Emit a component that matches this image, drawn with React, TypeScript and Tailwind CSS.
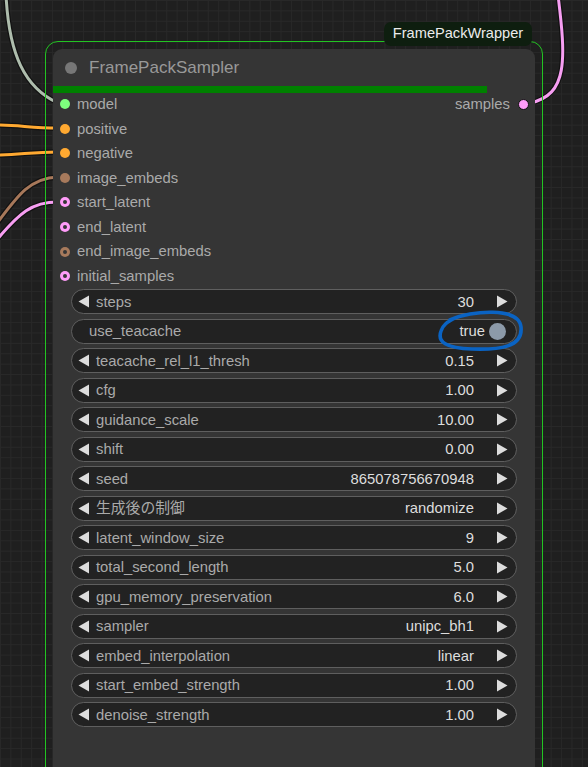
import React from "react"

type Slot = { name: string; color: string; ring?: boolean }

const slots: Slot[] = [
  { name: "model", color: "#7dff7d" },
  { name: "positive", color: "#ffa931" },
  { name: "negative", color: "#ffa931" },
  { name: "image_embeds", color: "#a77a5c" },
  { name: "start_latent", color: "#ff9cf9", ring: true },
  { name: "end_latent", color: "#ff9cf9", ring: true },
  { name: "end_image_embeds", color: "#a77a5c", ring: true },
  { name: "initial_samples", color: "#ff9cf9", ring: true },
]

const widgets: { label: string; value: string; toggle?: boolean }[] = [
  { label: "steps", value: "30" },
  { label: "use_teacache", value: "true", toggle: true },
  { label: "teacache_rel_l1_thresh", value: "0.15" },
  { label: "cfg", value: "1.00" },
  { label: "guidance_scale", value: "10.00" },
  { label: "shift", value: "0.00" },
  { label: "seed", value: "865078756670948" },
  { label: "生成後の制御", value: "randomize" },
  { label: "latent_window_size", value: "9" },
  { label: "total_second_length", value: "5.0" },
  { label: "gpu_memory_preservation", value: "6.0" },
  { label: "sampler", value: "unipc_bh1" },
  { label: "embed_interpolation", value: "linear" },
  { label: "start_embed_strength", value: "1.00" },
  { label: "denoise_strength", value: "1.00" },
]

function Arrow({ dir }: { dir: "left" | "right" }) {
  return (
    <svg width="12" height="13" viewBox="0 0 12 13" className="shrink-0">
      {dir === "left" ? (
        <polygon points="11,0.5 11,12.5 0.5,6.5" fill="#dddddd" />
      ) : (
        <polygon points="1,0.5 1,12.5 11.5,6.5" fill="#dddddd" />
      )}
    </svg>
  )
}

function Dot({ slot }: { slot: Slot }) {
  return (
    <span
      className="w-[10px] h-[10px] rounded-full flex items-center justify-center shrink-0"
      style={{ backgroundColor: slot.color }}
    >
      {slot.ring && <span className="w-[4px] h-[4px] rounded-full bg-[#353535]" />}
    </span>
  )
}

function Wires() {
  const wire = (d: string, color: string) => (
    <g key={d}>
      <path d={d} stroke="#111" strokeWidth="5.5" fill="none" />
      <path d={d} stroke={color} strokeWidth="3" fill="none" />
    </g>
  )
  return (
    <svg className="absolute inset-0" width="588" height="767">
      {wire("M 6 -5 C 9 55, 25 88, 58 103", "#aebdad")}
      {wire("M -5 125 C 20 125, 30 128, 58 128", "#ffa931")}
      {wire("M -5 155 C 20 155, 30 152, 58 152", "#ffa931")}
      {wire("M -5 226 C 18 195, 30 178, 58 177", "#a7785a")}
      {wire("M -5 242 C 20 212, 32 202, 58 202", "#f79ef2")}
      {wire("M 558 -5 C 566 60, 568 95, 530 103", "#f79ef2")}
    </svg>
  )
}

export default function App() {
  return (
    <div
      className="relative w-[588px] h-[767px] overflow-hidden bg-[#1f1f1f] bg-[linear-gradient(to_right,#282828_1px,transparent_1px),linear-gradient(to_bottom,#282828_1px,transparent_1px)] bg-[size:10.4px_10.4px]"
      style={{ fontFamily: '"Liberation Sans", Arial, "Noto Sans CJK JP", sans-serif' }}
    >
      <Wires />

      {/* group frame */}
      <div className="absolute left-[45px] top-[41px] w-[498px] h-[800px] border-[1.5px] border-[#22c422] rounded-[13px]" />
      <div className="absolute left-[384px] top-[22px] w-[148px] h-[24px] rounded-[7px] bg-[#0e1e0f] flex items-center justify-center text-[14.6px] text-[#ececec]">
        FramePackWrapper
      </div>

      {/* node */}
      <div className="absolute left-[53px] top-[49px] w-[482px] h-[760px] bg-[#353535] rounded-[9px] flex flex-col">
        <div className="h-[37px] flex items-center pl-[12px] gap-[12px]">
          <span className="w-[12px] h-[12px] rounded-full bg-[#777777]" />
          <span className="text-[17px] text-[#999999]">FramePackSampler</span>
        </div>
        <div className="h-[7px] w-[434px] bg-[#008000]" />

        <div className="mt-[1px] flex flex-col gap-[4.6px]">
          {slots.map((s, i) => (
            <div key={s.name} className="h-[20px] flex items-center justify-between pl-[7px] pr-[6px]">
              <div className="flex items-center gap-[7px]">
                <Dot slot={s} />
                <span className="text-[14.8px] text-[#aaaaaa]">{s.name}</span>
              </div>
              {i === 0 && (
                <div className="flex items-center gap-[8px]">
                  <span className="text-[14.8px] text-[#aaaaaa]">samples</span>
                  <span className="w-[11px] h-[11px] rounded-full bg-[#ff9cf9] border border-[#111]" />
                </div>
              )}
            </div>
          ))}
        </div>

        <div className="mt-[3px] px-[18px] flex flex-col gap-[4.5px]">
          {widgets.map((w) =>
            w.toggle ? (
              <div
                key={w.label}
                className="h-[25px] rounded-full bg-[#222222] border border-[#5f5f5f] flex items-center pl-[17px] pr-[10px] text-[14.8px]"
              >
                <span className="text-[#aaaaaa] flex-1">{w.label}</span>
                <span className="text-[#dddddd]">{w.value}</span>
                <span className="ml-[4px] w-[17px] h-[17px] rounded-full bg-[#8c9aa9]" />
              </div>
            ) : (
              <div
                key={w.label}
                className="h-[25px] rounded-full bg-[#222222] border border-[#5f5f5f] flex items-center pl-[6px] pr-[8px] text-[14.8px]"
              >
                <Arrow dir="left" />
                <span className="ml-[6px] text-[#aaaaaa] flex-1">{w.label}</span>
                <span className="text-[#dddddd]">{w.value}</span>
                <span className="ml-[22px]">
                  <Arrow dir="right" />
                </span>
              </div>
            )
          )}
        </div>
      </div>

      {/* blue annotation */}
      <svg className="absolute inset-0 pointer-events-none" width="588" height="767">
        <path
          d="M 450 320 C 472 310, 519 307, 521 327 C 523 347, 500 350, 472 349 C 446 348, 437 342, 441 331 C 443 325, 447 322, 455 318"
          stroke="#0a63c3"
          strokeWidth="3.6"
          fill="none"
          strokeLinecap="round"
        />
      </svg>
    </div>
  )
}
